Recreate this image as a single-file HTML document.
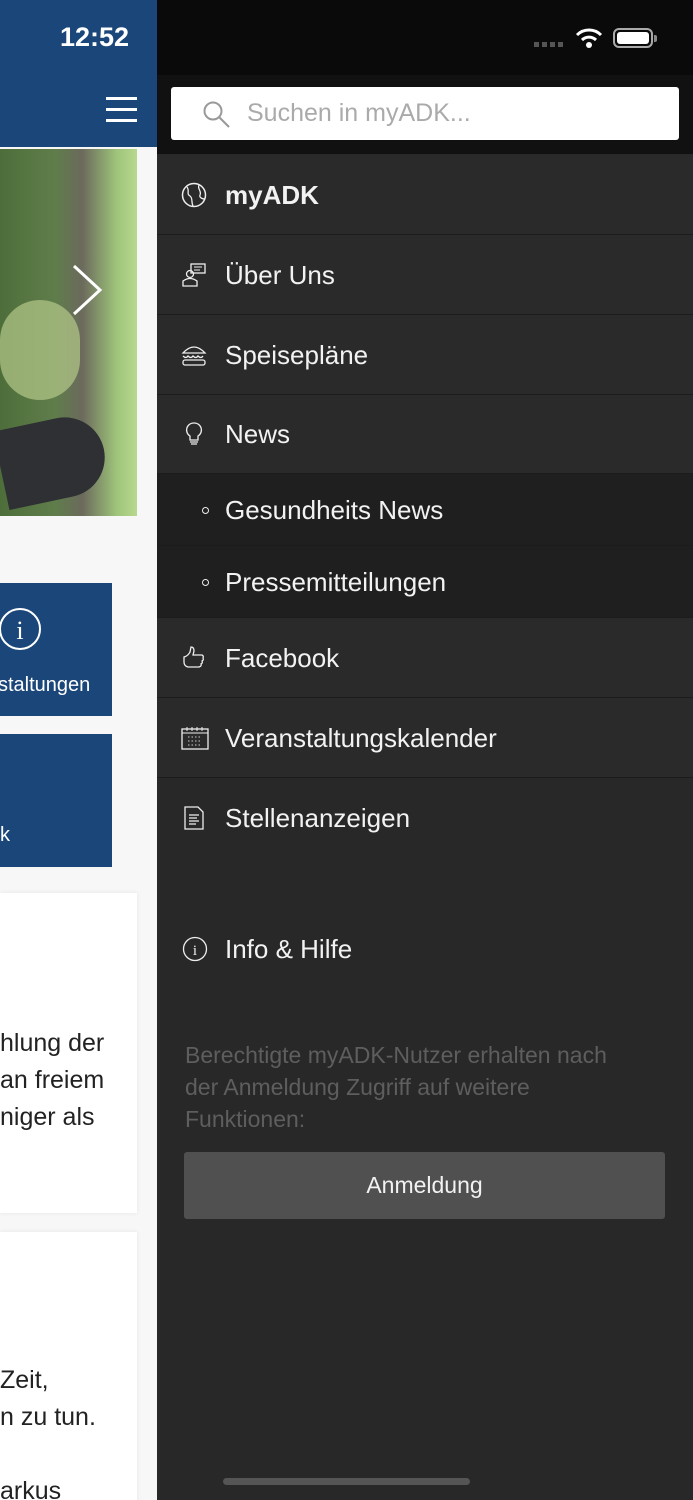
<!DOCTYPE html>
<html><head><meta charset="utf-8"><style>
*{margin:0;padding:0;box-sizing:border-box}
body{width:693px;height:1500px;overflow:hidden;background:#282828;font-family:"Liberation Sans","DejaVu Sans",sans-serif;position:relative}
.a{position:absolute}
.left{left:0;top:0;width:157px;height:1500px;background:#f7f7f7;overflow:hidden}
.item{position:absolute;left:157px;width:536px;border-bottom:1px solid #1c1c1c;background:#2a2a2a;color:#f2f2f2;font-size:26px}
.item span{position:absolute;left:68px;top:50%;transform:translateY(-48%)}
.item svg{position:absolute;left:24px;top:50%;transform:translateY(-50%)}
</style></head><body>
<div class="a left">
 <div class="a" style="left:0;top:0;width:157px;height:147px;background:#1b4679"></div>
 <div class="a" style="left:60px;top:22px;color:#fff;font-size:27px;font-weight:bold">12:52</div>
 <div class="a" style="left:106px;top:97px;width:31px;height:3px;background:#fff;box-shadow:0 11px 0 #fff,0 22px 0 #fff"></div>
 <div class="a" style="left:0;top:149px;width:137px;height:367px;background:linear-gradient(90deg,#4d6e3a 0%,#5f7d4a 40%,#6b6a5c 60%,#9ec47a 85%,#b7d98e 100%)"></div>
 <div class="a" style="left:0;top:300px;width:80px;height:100px;background:#b5c98a;border-radius:40px;opacity:.7"></div>
 <div class="a" style="left:0;top:420px;width:105px;height:80px;background:#2e3034;border-radius:0 40px 40px 0;transform:rotate(-12deg)"></div>
 <svg class="a" style="left:70px;top:262px" width="34" height="56"><path d="M4 4 L30 28 L4 52" stroke="#fff" stroke-width="3" fill="none"/></svg>
 <div class="a" style="left:0;top:583px;width:112px;height:133px;background:#1b4679"></div>
 <svg class="a" style="left:0;top:606px" width="44" height="46"><circle cx="20" cy="23" r="20" stroke="#fff" stroke-width="2" fill="none"/><text x="20" y="33" fill="#fff" font-size="26" text-anchor="middle" font-family="Liberation Serif">i</text></svg>
 <div class="a" style="left:-2px;top:674px;color:#fff;font-size:20px">staltungen</div>
 <div class="a" style="left:0;top:734px;width:112px;height:133px;background:#1b4679"></div>
 <div class="a" style="left:0;top:824px;color:#fff;font-size:20px">k</div>
 <div class="a" style="left:0;top:893px;width:137px;height:320px;background:#fff;box-shadow:0 0 4px #e5e5e5"></div>
 <div class="a" style="left:0;top:1232px;width:137px;height:280px;background:#fff;box-shadow:0 0 4px #e5e5e5"></div>
 <div class="a" style="left:0;top:1025px;color:#222;font-size:25px;line-height:37px;white-space:nowrap">hlung der<br>an freiem<br>niger als</div>
 <div class="a" style="left:0;top:1362px;color:#222;font-size:25px;line-height:37px;white-space:nowrap">Zeit,<br>n zu tun.<br>&nbsp;<br>arkus</div>
</div>
<div class="a" style="left:157px;top:0;width:536px;height:75px;background:#0a0a0a"></div>
<div class="a" style="left:534px;top:42px;width:32px;height:5px;background:repeating-linear-gradient(90deg,#555 0 5px,transparent 5px 8px)"></div>
<svg class="a" style="left:575px;top:27px" width="28" height="22"><path d="M2 8 A17 17 0 0 1 26 8" stroke="#fff" stroke-width="3" fill="none"/><path d="M7 13 A10 10 0 0 1 21 13" stroke="#fff" stroke-width="3" fill="none"/><circle cx="14" cy="18" r="3" fill="#fff"/></svg>
<div class="a" style="left:613px;top:28px;width:40px;height:20px;border:2px solid #aaa;border-radius:6px;padding:2px"><div style="width:100%;height:100%;background:#fff;border-radius:3px"></div></div>
<div class="a" style="left:654px;top:35px;width:3px;height:7px;background:#888;border-radius:0 2px 2px 0"></div>
<div class="a" style="left:157px;top:75px;width:536px;height:79px;background:#111"></div>
<div class="a" style="left:171px;top:87px;width:508px;height:53px;background:#fff;border-radius:3px"></div>
<svg class="a" style="left:202px;top:100px" width="30" height="30"><circle cx="11" cy="11" r="8.5" stroke="#999" stroke-width="2" fill="none"/><path d="M17 17 L27 27" stroke="#999" stroke-width="2"/></svg>
<div class="a" style="left:247px;top:99px;color:#aaa;font-size:25px">Suchen in myADK...</div>

<div class="item" style="top:155px;height:80px"><svg width="26" height="26" viewBox="0 0 26 26"><circle cx="13" cy="13" r="11.5" stroke="#eee" stroke-width="1.5" fill="none"/><path d="M6 5 C9 9 5 12 9 14 C12 16 10 20 12 24 M18 3 C16 7 21 9 19 13 C18 16 22 17 24 17" stroke="#eee" stroke-width="1.3" fill="none"/></svg><span style="font-weight:bold">myADK</span></div>
<div class="item" style="top:235px;height:80px"><svg width="26" height="26" viewBox="0 0 26 26"><circle cx="9" cy="12" r="3.5" stroke="#eee" stroke-width="1.3" fill="none"/><path d="M2 24 V19 Q9 14 16 19 V24 Z" stroke="#eee" stroke-width="1.3" fill="none"/><rect x="10" y="2" width="14" height="9" stroke="#eee" stroke-width="1.3" fill="none"/><path d="M13 5h8M13 8h6" stroke="#eee"/></svg><span>Über Uns</span></div>
<div class="item" style="top:315px;height:80px"><svg width="26" height="26" viewBox="0 0 26 26"><path d="M2 11 Q13 -1 24 11 Z" stroke="#eee" stroke-width="1.3" fill="none"/><path d="M2 14 q3 3 5 0 q3 3 5 0 q3 3 5 0 q3 3 5 0" stroke="#eee" stroke-width="1.3" fill="none"/><rect x="2" y="18" width="22" height="5" rx="2" stroke="#eee" stroke-width="1.3" fill="none"/></svg><span>Speisepläne</span></div>
<div class="item" style="top:395px;height:79px"><svg width="26" height="26" viewBox="0 0 26 26"><path d="M13 2 A7 7 0 0 1 17 15 V19 H9 V15 A7 7 0 0 1 13 2 Z" stroke="#eee" stroke-width="1.3" fill="none"/><path d="M9 21h8M10 23h6" stroke="#eee" stroke-width="1.3"/></svg><span>News</span></div>
<div class="item" style="top:474px;height:72px;background:#1f1f1f"><div class="a" style="left:45px;top:33px;width:7px;height:7px;border:1.5px solid #eee;border-radius:50%"></div><span>Gesundheits News</span></div>
<div class="item" style="top:546px;height:72px;background:#1f1f1f"><div class="a" style="left:45px;top:33px;width:7px;height:7px;border:1.5px solid #eee;border-radius:50%"></div><span>Pressemitteilungen</span></div>
<div class="item" style="top:618px;height:80px"><svg width="26" height="26" viewBox="0 0 26 26"><path d="M3 12 Q7 11 9 7 L10 2 Q13 2 13 6 L12 10 H21 Q23 11 22 13 Q23 15 21 16 Q22 18 20 19 Q21 21 18 22 H7 Q3 21 3 17 Z" stroke="#eee" stroke-width="1.3" fill="none"/></svg><span>Facebook</span></div>
<div class="item" style="top:698px;height:80px"><svg width="28" height="26" viewBox="0 0 28 26"><rect x="1" y="4" width="26" height="20" stroke="#eee" stroke-width="1.3" fill="none"/><path d="M1 8h26" stroke="#eee"/><path d="M6 2v4M11 2v4M16 2v4M21 2v4" stroke="#eee"/><path d="M7 12h14M7 16h14M7 20h14" stroke="#ccc" stroke-dasharray="1.5 2"/></svg><span>Veranstaltungskalender</span></div>
<div class="item" style="top:778px;height:80px;border:none;background:#282828"><svg width="26" height="26" viewBox="0 0 26 26"><path d="M4 2 H17 L22 7 V24 H4 Z" stroke="#eee" stroke-width="1.3" fill="none"/><path d="M8 10h10M8 13h8M8 16h10M8 19h7" stroke="#eee" stroke-width="1.2"/></svg><span>Stellenanzeigen</span></div>
<svg class="a" style="left:182px;top:936px" width="26" height="26" viewBox="0 0 26 26"><circle cx="13" cy="13" r="11.5" stroke="#eee" stroke-width="1.3" fill="none"/><text x="13" y="19" fill="#eee" font-size="15" text-anchor="middle" font-family="Liberation Serif">i</text></svg>
<div class="a" style="left:225px;top:934px;color:#f2f2f2;font-size:26px">Info &amp; Hilfe</div>
<div class="a" style="left:185px;top:1039px;width:500px;color:#5e5e5e;font-size:23px;line-height:32px;white-space:nowrap">Berechtigte myADK-Nutzer erhalten nach<br>der Anmeldung Zugriff auf weitere<br>Funktionen:</div>
<div class="a" style="left:184px;top:1152px;width:481px;height:67px;background:#505050;border-radius:3px;color:#f2f2f2;font-size:23px;text-align:center;line-height:67px">Anmeldung</div>
<div class="a" style="left:223px;top:1478px;width:247px;height:7px;background:#555;border-radius:4px"></div>
</body></html>
